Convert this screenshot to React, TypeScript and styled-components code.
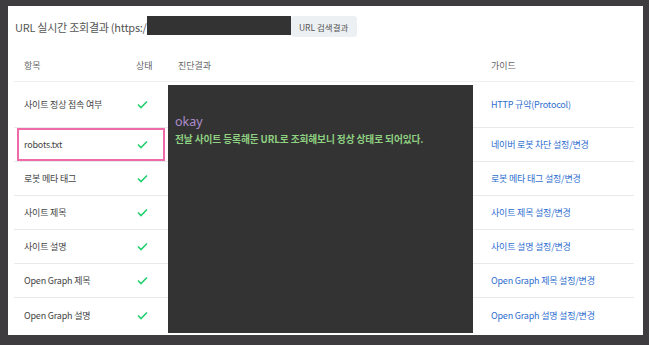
import React from "react";
import styled, { createGlobalStyle } from "styled-components";

const Global = createGlobalStyle`
  html, body { margin: 0; padding: 0; background: #3e3c3e; }
  body { font-family: "Noto Sans CJK KR", "Noto Sans", sans-serif; }
`;

const Panel = styled.div`
  margin: 6px 0 0 8px;
  width: 635px;
  height: 329px;
  background: #ffffff;
  box-sizing: border-box;
  padding: 10px 9px 0 6px;
`;

const TitleRow = styled.div`
  display: flex;
  align-items: center;
  height: 21px;
  padding-left: 1px;
`;

const Title = styled.span`
  font-size: 11px;
  color: #555;
  letter-spacing: -0.25px;
  white-space: nowrap;
`;

const Redact = styled.span`
  display: block;
  width: 144px;
  height: 19px;
  background: #333333;
  align-self: flex-start;
`;

const SmallButton = styled.button`
  height: 21px;
  width: 66px;
  border: none;
  border-radius: 3px;
  background: #edf0f3;
  color: #555;
  font-family: inherit;
  font-size: 8.5px;
  padding: 0;
  align-self: flex-start;
`;

const Table = styled.div`
  margin-top: 13px;
  display: grid;
  grid-template-columns: 116px 38px 305px 161px;
  grid-template-rows: 32px 46px repeat(6, 34px);
`;

const Head = styled.div<{ $pl: number }>`
  display: flex;
  align-items: center;
  padding-left: ${(p) => p.$pl}px;
  font-size: 9px;
  color: #666;
  border-bottom: 1px solid #efefef;
`;

const Cell = styled.div<{ $pl?: number; $last?: boolean }>`
  display: flex;
  align-items: center;
  padding-left: ${(p) => p.$pl ?? 10}px;
  font-size: 9px;
  color: #444;
  letter-spacing: -0.2px;
  border-bottom: ${(p) => (p.$last ? "none" : "1px solid #e9e9e9")};
  white-space: nowrap;
`;

const LinkCell = styled(Cell)`
  color: #2f6fd0;
`;

const Result = styled.div`
  grid-column: 3;
  grid-row: 2 / 9;
  margin-top: 3px;
  margin-bottom: -1px;
  background: #333333;
  padding: 30px 0 0 7px;
`;

const Okay = styled.div`
  color: #ad8ccc;
  font-family: "Noto Sans", sans-serif;
  font-size: 12.5px;
  line-height: 14px;
`;

const Message = styled.div`
  margin-top: 3px;
  color: #8fd182;
  font-size: 9.7px;
  font-weight: bold;
  letter-spacing: -0.1px;
  white-space: nowrap;
`;

const Highlight = styled.div`
  grid-column: 1 / 3;
  grid-row: 3;
  margin: 0 3px 1px 3px;
  border: 2px solid #f06aaa;
  pointer-events: none;
`;

const Check = () => (
  <svg width="11" height="9" viewBox="0 0 11 9">
    <polyline points="1,4.5 4,7.5 10,1.5" fill="none" stroke="#22d070" strokeWidth="1.6" />
  </svg>
);

const rows = [
  ["사이트 정상 접속 여부", "HTTP 규약(Protocol)"],
  ["robots.txt", "네이버 로봇 차단 설정/변경"],
  ["로봇 메타 태그", "로봇 메타 태그 설정/변경"],
  ["사이트 제목", "사이트 제목 설정/변경"],
  ["사이트 설명", "사이트 설명 설정/변경"],
  ["Open Graph 제목", "Open Graph 제목 설정/변경"],
  ["Open Graph 설명", "Open Graph 설명 설정/변경"],
];

export default function App() {
  return (
    <>
      <Global />
      <Panel>
        <TitleRow>
          <Title>URL 실시간 조회결과 (https:/</Title>
          <Redact />
          <SmallButton>URL 검색결과</SmallButton>
        </TitleRow>
        <Table>
          <Head $pl={10}>항목</Head>
          <Head $pl={6}>상태</Head>
          <Head $pl={10}>진단결과</Head>
          <Head $pl={18}>가이드</Head>
          {rows.map(([name, guide], i) => {
            const last = i === rows.length - 1;
            const r = i + 2;
            return (
              <React.Fragment key={name}>
                <Cell style={{ gridRow: r, gridColumn: 1 }} $last={last}>
                  {name}
                </Cell>
                <Cell style={{ gridRow: r, gridColumn: 2 }} $pl={7} $last={last}>
                  <Check />
                </Cell>
                <LinkCell style={{ gridRow: r, gridColumn: 4 }} $pl={18} $last={last}>
                  {guide}
                </LinkCell>
              </React.Fragment>
            );
          })}
          <Result>
            <Okay>okay</Okay>
            <Message>전날 사이트 등록해둔 URL로 조회해보니 정상 상태로 되어있다.</Message>
          </Result>
          <Highlight />
        </Table>
      </Panel>
    </>
  );
}
